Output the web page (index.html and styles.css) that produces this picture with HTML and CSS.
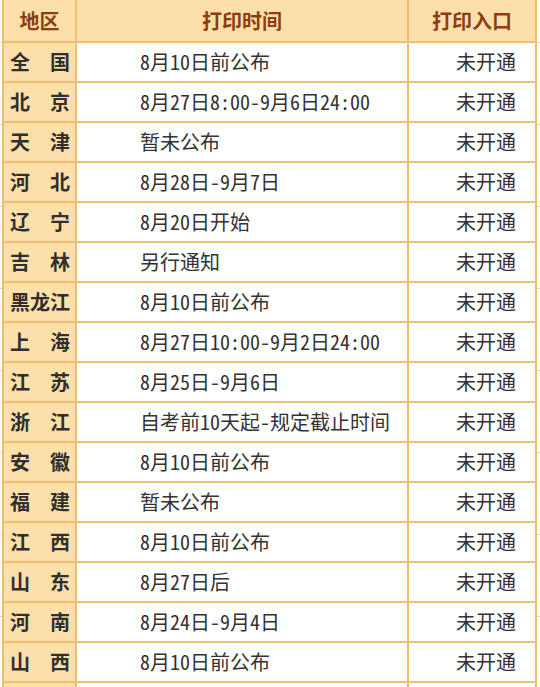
FILE: index.html
```html
<!DOCTYPE html>
<html lang="zh-CN">
<head>
<meta charset="utf-8">
<title>打印时间</title>
<link rel="stylesheet" href="styles.css">
</head>
<body>
<table class="sched">
  <colgroup>
    <col class="c-area">
    <col class="c-time">
    <col class="c-entry">
  </colgroup>
  <thead>
    <tr class="head">
      <th>地区</th>
      <th>打印时间</th>
      <th>打印入口</th>
    </tr>
  </thead>
  <tbody>
    <tr><td class="area">全国</td><td class="time">8月10日前公布</td><td class="entry">未开通</td></tr>
    <tr><td class="area">北京</td><td class="time">8月27日8:00-9月6日24:00</td><td class="entry">未开通</td></tr>
    <tr><td class="area">天津</td><td class="time">暂未公布</td><td class="entry">未开通</td></tr>
    <tr><td class="area">河北</td><td class="time">8月28日-9月7日</td><td class="entry">未开通</td></tr>
    <tr><td class="area">辽宁</td><td class="time">8月20日开始</td><td class="entry">未开通</td></tr>
    <tr><td class="area">吉林</td><td class="time">另行通知</td><td class="entry">未开通</td></tr>
    <tr><td class="area">黑龙江</td><td class="time">8月10日前公布</td><td class="entry">未开通</td></tr>
    <tr><td class="area">上海</td><td class="time">8月27日10:00-9月2日24:00</td><td class="entry">未开通</td></tr>
    <tr><td class="area">江苏</td><td class="time">8月25日-9月6日</td><td class="entry">未开通</td></tr>
    <tr><td class="area">浙江</td><td class="time">自考前10天起-规定截止时间</td><td class="entry">未开通</td></tr>
    <tr><td class="area">安徽</td><td class="time">8月10日前公布</td><td class="entry">未开通</td></tr>
    <tr><td class="area">福建</td><td class="time">暂未公布</td><td class="entry">未开通</td></tr>
    <tr><td class="area">江西</td><td class="time">8月10日前公布</td><td class="entry">未开通</td></tr>
    <tr><td class="area">山东</td><td class="time">8月27日后</td><td class="entry">未开通</td></tr>
    <tr><td class="area">河南</td><td class="time">8月24日-9月4日</td><td class="entry">未开通</td></tr>
    <tr><td class="area">山西</td><td class="time">8月10日前公布</td><td class="entry">未开通</td></tr>
    <tr><td class="area">内蒙古</td><td class="time">8月10日前公布</td><td class="entry">未开通</td></tr>
  </tbody>
</table>
</body>
</html>
```
FILE: styles.css
```css
html, body {
  margin: 0;
  padding: 0;
}
body {
  background-color: #fff;
  background-image: repeating-linear-gradient(to bottom, transparent 0, transparent 42px, #d9d9d9 42px, #d9d9d9 43px, transparent 43px, transparent 82px);
  background-position: 0 0;
  font-family: "Noto Sans Mono CJK SC", "Noto Sans CJK SC", "Noto Sans", sans-serif;
  font-feature-settings: "hwid" 1;
  color: #333;
  overflow: hidden;
}
.sched {
  border-collapse: collapse;
  table-layout: fixed;
  width: 535px;
  margin: -2px 0 0 2px;
  font-size: 20px;
  background: #fff;
}
.c-area { width: 73px; }
.c-time { width: 332px; }
.c-entry { width: 128px; }
.sched th,
.sched td {
  border: 2px solid #f0bf6c;
  padding: 0;
  white-space: nowrap;
  line-height: 24px;
}
.head {
  height: 43px;
  background: #fde0a9;
}
.head th {
  color: #8d3c14;
  font-weight: bold;
  text-align: center;
}
.sched tbody tr {
  height: 40px;
}
.area {
  background: #fde0a9;
  font-weight: bold;
  color: #2f2f2f;
  padding: 0 5px 0 6px !important;
  text-align: justify;
  text-align-last: justify;
}
.time {
  padding-left: 63px !important;
  text-align: left;
}
.entry {
  text-align: right;
  padding-right: 19px !important;
}
```
